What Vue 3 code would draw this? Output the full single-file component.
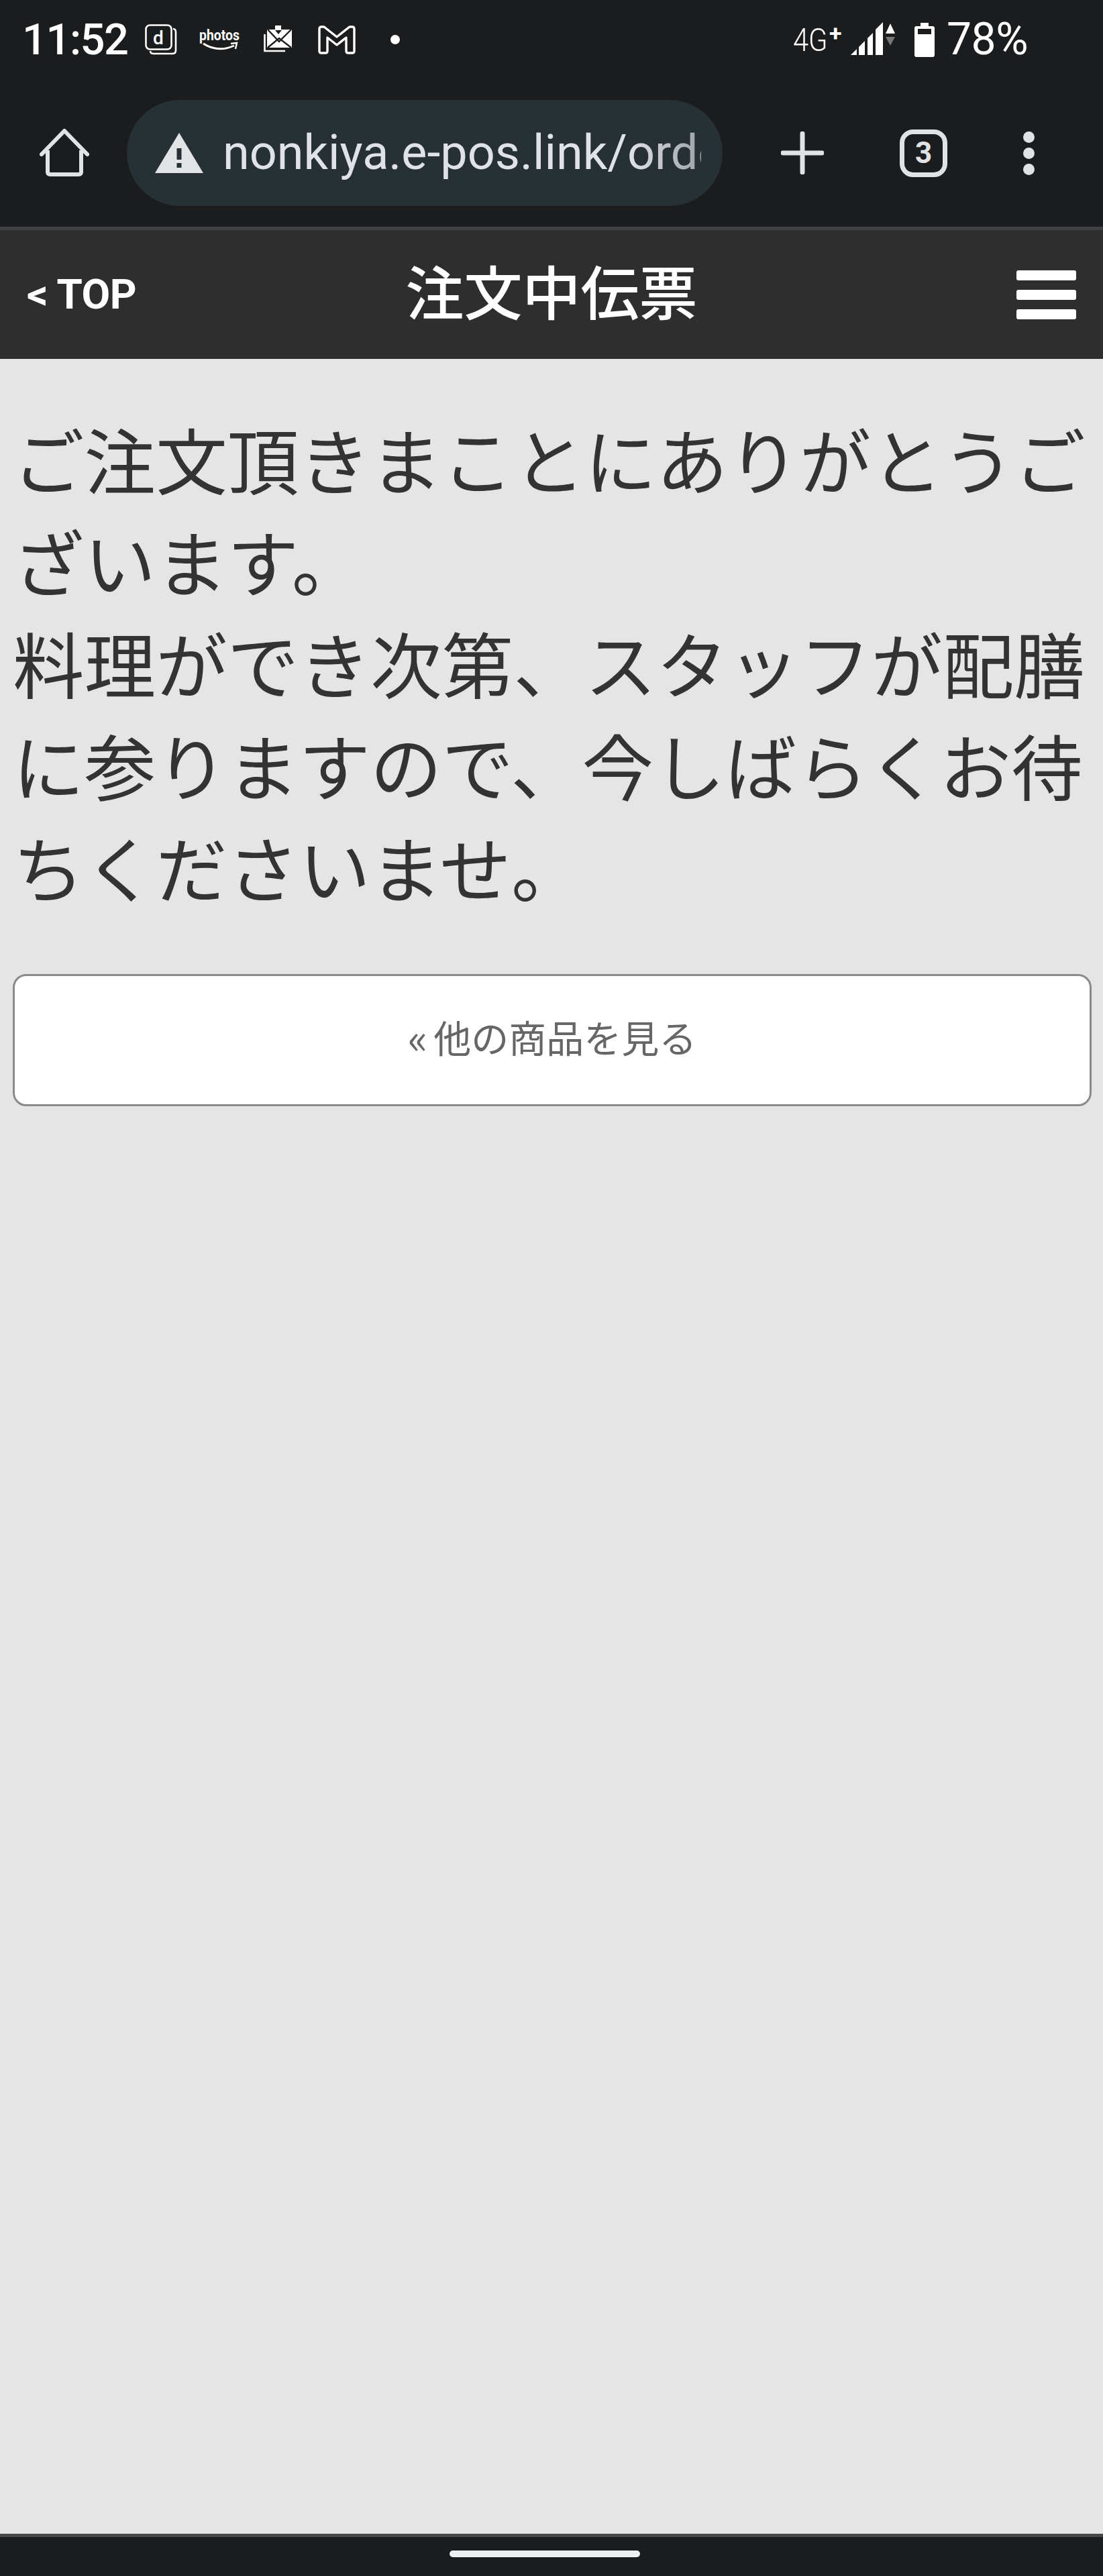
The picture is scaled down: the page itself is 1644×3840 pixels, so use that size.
<script setup>
const title = '注文中伝票'
const message = ['ご注文頂きまことにありがとうございます。', '料理ができ次第、スタッフが配膳に参りますので、今しばらくお待ちくださいませ。']
</script>

<template>
  <div class="screen">
    <div class="chrome">
      <!-- status bar -->
      <div class="status">
        <span class="time">11:52</span>
        <svg class="st-d" width="48" height="46" viewBox="0 0 48 46">
          <rect x="1.5" y="1.5" width="38" height="36" rx="6" fill="none" stroke="#fff" stroke-width="2.6" />
          <path d="M42 7 Q46 7 46 12 V39 Q46 44 41 44 H13 Q8 44 8 40" fill="none" stroke="#fff" stroke-width="2.6" />
          <text x="20" y="30" text-anchor="middle" class="st-d-text">d</text>
        </svg>
        <svg class="st-photos" width="60" height="48" viewBox="0 -6 60 48">
          <text x="0" y="19" textLength="60" lengthAdjust="spacingAndGlyphs" class="st-photos-text">photos</text>
          <path d="M6 24 Q28 38 52 27" fill="none" stroke="#fff" stroke-width="3" />
          <path d="M47 24 L56 23 L54 32" fill="none" stroke="#fff" stroke-width="2.4" />
        </svg>
        <svg class="st-mail" width="43" height="40" viewBox="0 0 43 40">
          <path d="M1.5 13 V38 H32" fill="none" stroke="#fff" stroke-width="2.6" />
          <path d="M5 6 H17 V0 H26 V6 H42 V33 H5 Z" fill="#fff" />
          <path d="M6 6 L23 24 L41 6 M6 33 L23 19 L41 33" fill="none" stroke="#1b1c1e" stroke-width="2.4" />
          <path d="M17 7 H27 L22 13 Z" fill="#1b1c1e" />
        </svg>
        <svg class="st-m" width="56" height="43" viewBox="0 0 56 43">
          <path d="M2 5 Q2 2 5 2 H9 L28 17 L47 2 H51 Q54 2 54 5 V38 Q54 41 51 41 H45 Q42 41 42 38 V18 L28 29 L14 18 V38 Q14 41 11 41 H5 Q2 41 2 38 Z" fill="none" stroke="#fff" stroke-width="3.4" stroke-linejoin="round" />
        </svg>
        <span class="st-dot"></span>
        <span class="st-net"><span class="st-net-g">4G</span><span class="st-net-plus">+</span></span>
        <svg class="st-signal" width="68" height="50" viewBox="0 0 68 50">
          <polygon points="0,49 9,40 9,49" fill="#fff" />
          <polygon points="12,37 21,28 21,49 12,49" fill="#fff" />
          <polygon points="25,24 33,16 33,49 25,49" fill="#fff" />
          <polygon points="37,11 48,0 48,49 37,49" fill="#fff" />
          <polygon points="59,2 66,17 52,17" fill="#fff" />
          <polygon points="52,22 66,22 59,35" fill="#777" />
        </svg>
        <svg class="st-battery" width="30" height="51" viewBox="0 0 30 51">
          <path d="M9 0 H21 V5 H27 Q30 5 30 8 V48 Q30 51 27 51 H3 Q0 51 0 48 V8 Q0 5 3 5 H9 Z" fill="#fff" />
          <rect x="5" y="9" width="20" height="8" fill="#1b1c1e" />
        </svg>
        <span class="st-pct">78%</span>
      </div>

      <!-- browser toolbar -->
      <div class="toolbar">
        <svg class="tb-home" width="74" height="72" viewBox="0 0 74 72">
          <path d="M3 38 L37 3 L71 38" fill="none" stroke="#e1e2e4" stroke-width="6" stroke-linecap="round" stroke-linejoin="round" />
          <path d="M12 32 V64 Q12 68 16 68 H58 Q62 68 62 64 V32" fill="none" stroke="#e1e2e4" stroke-width="6" />
        </svg>
        <div class="url">
          <svg class="url-warn" width="72" height="60" viewBox="0 0 72 60">
            <polygon points="36,0 72,60 0,60" fill="#e1e3e5" />
            <rect x="32.500" y="23" width="7" height="17" fill="#263035" />
            <rect x="32.500" y="45" width="7" height="7" fill="#263035" />
          </svg>
          <span class="url-text">nonkiya.e-pos.link/order/slip</span>
        </div>
        <svg class="tb-plus" width="64" height="64" viewBox="0 0 64 64">
          <path d="M32 3 V61 M3 32 H61" stroke="#e1e2e4" stroke-width="7" stroke-linecap="round" />
        </svg>
        <span class="tb-tabs">3</span>
        <span class="tb-more"><i></i><i></i><i></i></span>
      </div>
    </div>

    <!-- page header -->
    <header class="head">
      <a class="head-back">&lt; TOP</a>
      <h1 class="head-title">{{ title }}</h1>
      <div class="head-menu"><i></i><i></i><i></i></div>
    </header>

    <main class="main">
      <p class="message">
        <template v-for="(line, i) in message" :key="i">{{ line }}<br v-if="i < message.length - 1" /></template>
      </p>
      <a class="more-btn"><span class="more-arrow">«</span>他の商品を見る</a>
    </main>

    <div class="navbar"><span class="nav-handle"></span></div>
  </div>
</template>

<style>
html, body {
  margin: 0;
  background: #e5e5e5;
}
</style>

<style scoped>
.screen {
  display: flex;
  flex-direction: column;
  min-height: 3840px;
  font-family: "Noto Sans CJK JP", "Liberation Sans", sans-serif;
}

.chrome {
  background: #1b1c1e;
  height: 338px;
  box-sizing: border-box;
}

.status {
  display: flex;
  align-items: center;
  height: 118px;
  color: #fff;
  font-family: Roboto, sans-serif;
}

.time {
  margin-left: 33px;
  font-size: 65px;
  font-weight: 500;
  line-height: 1.2;
  letter-spacing: -1.5px;
}

.st-d { margin-left: 26px; }
.st-photos { margin-left: 33px; }
.st-mail { margin-left: 36px; margin-top: -3px; }
.st-m { margin-left: 38px; }

.st-d-text {
  font: 500 28px Roboto, sans-serif;
  fill: #fff;
}

.st-photos-text {
  font: 700 22px Roboto, sans-serif;
  fill: #fff;
}

.st-dot {
  width: 14px;
  height: 14px;
  border-radius: 50%;
  background: #fff;
  margin-left: 52px;
}

.st-net {
  display: flex;
  align-items: flex-start;
  margin-left: auto;
  width: 76px;
  font-weight: 300;
  line-height: 1;
}

.st-net-g {
  font-size: 49px;
  transform: scaleX(0.85);
  transform-origin: left;
  width: 54px;
}

.st-net-plus {
  font-size: 34px;
  font-weight: 700;
  margin-top: -3px;
}

.st-signal { margin-left: 10px; margin-top: -2px; }
.st-battery { margin-left: 27px; }

.st-pct {
  margin-left: 18px;
  margin-right: 112px;
  font-size: 66px;
  line-height: 1.2;
  letter-spacing: -0.5px;
}

.toolbar {
  display: flex;
  align-items: center;
  height: 220px;
  color: #e1e2e4;
}

.tb-home {
  margin-left: 59px;
  flex: none;
}

.url {
  display: flex;
  align-items: center;
  box-sizing: border-box;
  width: 888px;
  height: 158px;
  margin-left: 56px;
  padding: 0 32px 0 42px;
  border-radius: 79px;
  background: #263035;
  overflow: hidden;
  flex: none;
}

.url-warn {
  flex: none;
}

.url-text {
  margin-left: 29px;
  flex: 1;
  overflow: hidden;
  white-space: nowrap;
  font-family: Roboto, sans-serif;
  font-size: 72px;
  line-height: 90px;
  color: #dfe2e6;
  -webkit-mask-image: linear-gradient(90deg, #000 85%, rgba(0, 0, 0, 0.65) 100%);
  mask-image: linear-gradient(90deg, #000 85%, rgba(0, 0, 0, 0.65) 100%);
}

.tb-plus {
  margin-left: 87px;
  flex: none;
}

.tb-tabs {
  display: flex;
  align-items: center;
  justify-content: center;
  box-sizing: border-box;
  width: 71px;
  height: 71px;
  margin-left: 113px;
  border: 7px solid #e1e2e4;
  border-radius: 20px;
  font-family: Roboto, sans-serif;
  font-size: 44px;
  font-weight: 700;
  flex: none;
}

.tb-more {
  display: flex;
  flex-direction: column;
  gap: 7px;
  margin-left: 113px;
}

.tb-more i {
  width: 17px;
  height: 17px;
  border-radius: 50%;
  background: #e1e2e4;
}

.head {
  display: grid;
  grid-template-columns: 1fr auto 1fr;
  align-items: center;
  height: 197px;
  box-sizing: border-box;
  padding: 0 40px;
  border-top: 5px solid #3f4346;
  background: #2e2e2e;
  color: #fff;
}

.head-back {
  font-family: Roboto, sans-serif;
  font-size: 62px;
  font-weight: 700;
  line-height: 1.2;
  letter-spacing: -0.5px;
}

.head-title {
  margin: 0;
  padding-bottom: 14px;
  font-size: 87px;
  font-weight: 500;
  line-height: 1.2;
}

.head-menu {
  justify-self: end;
  display: flex;
  flex-direction: column;
  gap: 14px;
  width: 89px;
}

.head-menu i {
  height: 15px;
  border-radius: 3px;
  background: #fff;
}

.main {
  flex: 1;
  padding: 0 19px;
  background: #e5e5e5;
  color: #333;
}

.message {
  margin: 0;
  padding-top: 72px;
  font-size: 106.600px;
  line-height: 152px;
}

.more-btn {
  display: flex;
  align-items: center;
  justify-content: center;
  box-sizing: border-box;
  width: 1608px;
  height: 197px;
  margin-top: 85px;
  padding-bottom: 12px;
  border: 3px solid #8a8a8a;
  border-radius: 20px;
  background: #fff;
  color: #666;
  font-size: 56px;
}

.more-arrow {
  margin-right: 9px;
  font-size: 62px;
  line-height: 1.2;
}

.navbar {
  height: 63px;
  box-sizing: border-box;
  display: flex;
  justify-content: center;
  padding-top: 20px;
  border-top: 5px solid #47484a;
  background: #1b1c1e;
}

.nav-handle {
  position: relative;
  left: -10px;
  width: 284px;
  height: 10px;
  border-radius: 5px;
  background: #eeeff1;
}
</style>
